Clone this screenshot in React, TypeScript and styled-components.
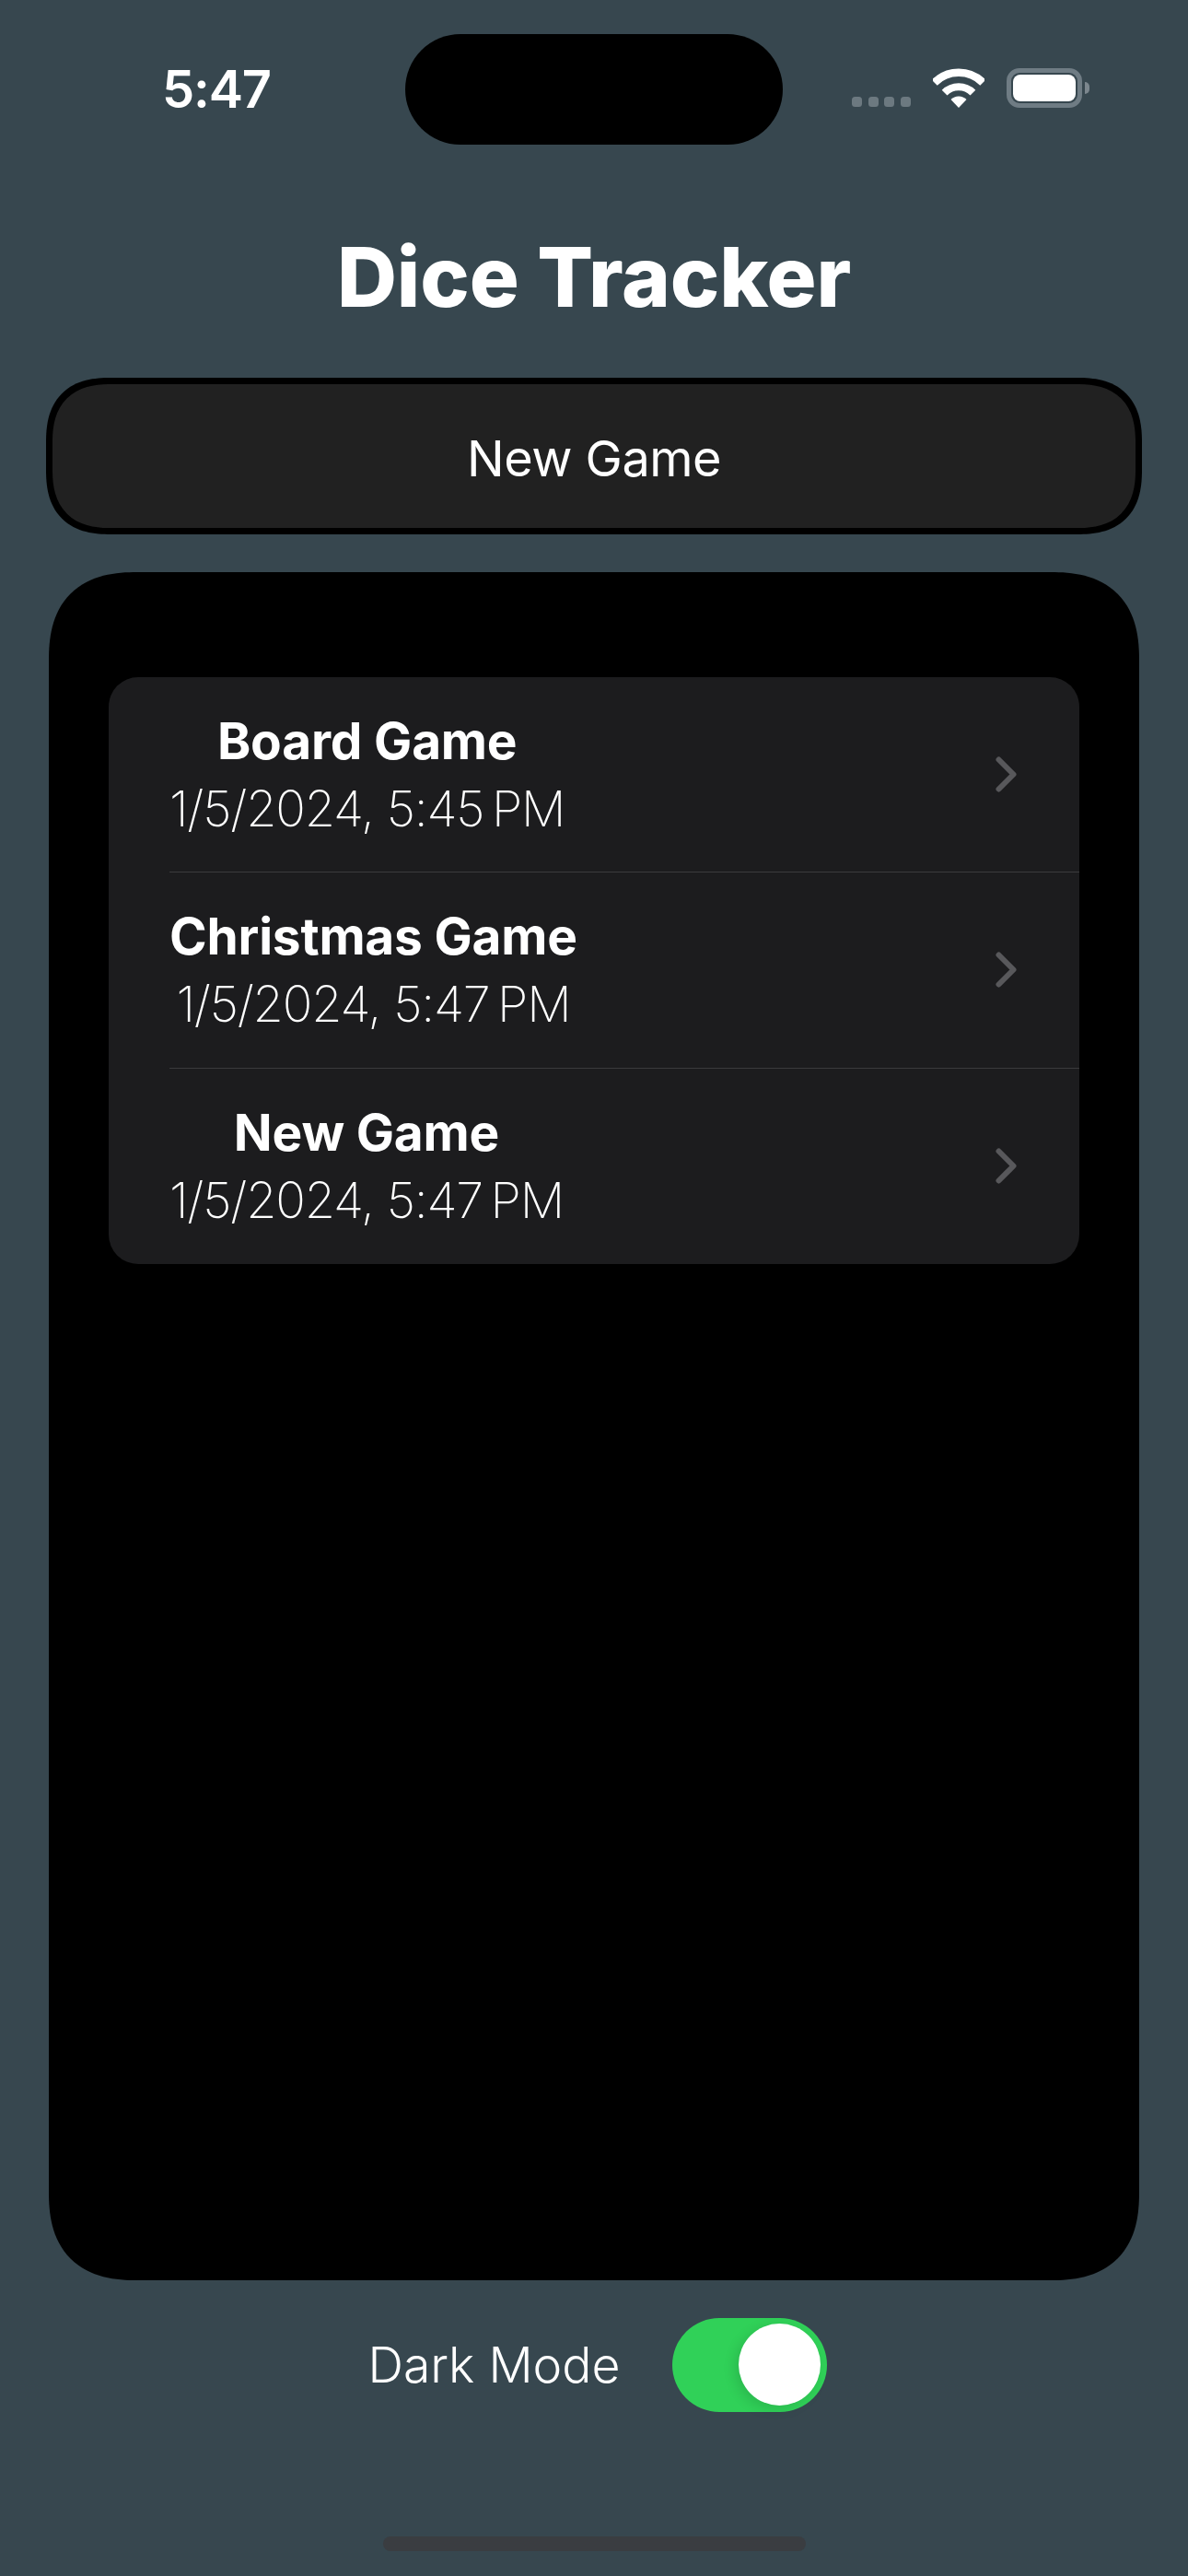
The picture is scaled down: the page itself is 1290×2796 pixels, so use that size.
import React from "react";
import styled, { createGlobalStyle } from "styled-components";

const Global = createGlobalStyle`
  html, body {
    margin: 0;
    padding: 0;
    background: #37474f;
  }
  * {
    box-sizing: border-box;
  }
`;

const Page = styled.div`
  width: 1290px;
  height: 2796px;
  overflow: hidden;
  background: #37474f;
  color: #fff;
  font-family: Inter, "Liberation Sans", sans-serif;
  display: flex;
  flex-direction: column;
  align-items: center;
  padding-top: 37px;
`;

const StatusBar = styled.div`
  width: 100%;
  height: 120px;
  display: grid;
  grid-template-columns: 440px 410px 440px;
  align-items: center;
`;

const Time = styled.div`
  padding-left: 176px;
  font-size: 56px;
  line-height: 120px;
  font-weight: 600;
  letter-spacing: -1.2px;
`;

const Island = styled.div`
  height: 120px;
  background: #000;
  border-radius: 60px;
`;

const StatusIcons = styled.div`
  height: 43px;
  margin-bottom: 3px;
  padding-left: 75px;
  display: flex;
  align-items: flex-end;
`;

const Dots = styled.div`
  display: flex;
  gap: 6.6px;
  margin-right: 24px;
  margin-bottom: 1px;
`;

const Dot = styled.span`
  width: 11px;
  height: 11px;
  border-radius: 3.5px;
  background: #6c7980;
`;

const Battery = styled.div`
  width: 82px;
  height: 43px;
  margin-left: 24px;
  padding: 2px;
  border: 5px solid #6f7c84;
  border-radius: 14px;
`;

const BatteryFill = styled.div`
  width: 100%;
  height: 100%;
  background: #fff;
  border-radius: 8px;
`;

const BatteryNub = styled.div`
  width: 5px;
  height: 13px;
  margin: 0 0 15px 3px;
  background: #7c878e;
  border-radius: 0 7px 7px 0;
`;

const Title = styled.h1`
  margin: 90px 0 55px;
  font-size: 90px;
  line-height: 108px;
  font-weight: 800;
  letter-spacing: -0.1px;
`;

const NewGameButton = styled.div`
  width: 1190px;
  height: 170px;
  border: 7px solid #000;
  border-radius: 70px;
  corner-shape: superellipse(1.3);
  background: #212121;
  display: flex;
  align-items: center;
  justify-content: center;
  padding-top: 4px;
  font-size: 54px;
  font-weight: 400;
  letter-spacing: -0.5px;
`;

const Panel = styled.div`
  width: 1184px;
  height: 1854px;
  margin-top: 41px;
  padding: 114px 65px 0;
  background: #000;
  border-radius: 96px;
  corner-shape: superellipse(1.3);
`;

const List = styled.div`
  height: 637px;
  background: #1c1c1e;
  border-radius: 32px;
  display: flex;
  flex-direction: column;
`;

const Row = styled.div`
  flex: 1;
  padding-left: 66px;
  display: flex;
`;

const RowInner = styled.div<{ $divider: boolean }>`
  flex: 1;
  padding-right: 68px;
  display: flex;
  align-items: center;
  justify-content: space-between;
  border-bottom: ${(p) => (p.$divider ? "1.5px solid #3a3a3c" : "none")};
`;

const RowText = styled.div`
  display: flex;
  flex-direction: column;
  align-items: center;
`;

const RowTitle = styled.div`
  font-size: 55px;
  line-height: 73px;
  font-weight: 700;
  letter-spacing: -0.2px;
`;

const RowDate = styled.div`
  font-size: 54px;
  line-height: 73px;
  font-weight: 150;
  letter-spacing: -1.2px;
`;

const Footer = styled.div`
  margin-top: 41px;
  padding-left: 7px;
  display: flex;
  align-items: center;
  gap: 56px;
`;

const FooterLabel = styled.div`
  font-size: 53.5px;
  line-height: 102px;
  font-weight: 350;
`;

const Switch = styled.div`
  position: relative;
  width: 168px;
  height: 102px;
  border-radius: 51px;
  background: #30d158;
`;

const Thumb = styled.div`
  position: absolute;
  top: 6px;
  right: 7px;
  width: 89px;
  height: 89px;
  border-radius: 50%;
  background: #fff;
  box-shadow: -4px 4px 14px rgba(0, 0, 0, 0.12);
`;

const HomeIndicator = styled.div`
  width: 459px;
  height: 16px;
  margin-top: 135px;
  border-radius: 8px;
  background: #3a3d41;
`;

const Wifi = () => (
  <svg width="56" height="43" viewBox="0 0 56 43" fill="none">
    <path d="M1.7 15.7A37.2 37.2 0 0 1 54.3 15.7" stroke="#fff" strokeWidth="8.6" />
    <path d="M12.6 26.6A21.8 21.8 0 0 1 43.4 26.6" stroke="#fff" strokeWidth="8.2" />
    <path d="M28 43L19.5 34A12 12 0 0 1 36.5 34Z" fill="#fff" />
  </svg>
);

const Chevron = () => (
  <svg width="23" height="39" viewBox="0 0 23 39" fill="none">
    <path
      d="M3.5 3.5L19.5 19.5L3.5 35.5"
      stroke="#58585b"
      strokeWidth="6"
      strokeLinecap="round"
      strokeLinejoin="round"
    />
  </svg>
);

const games = [
  { name: "Board Game", date: "1/5/2024, 5:45\u202fPM" },
  { name: "Christmas Game", date: "1/5/2024, 5:47\u202fPM" },
  { name: "New Game", date: "1/5/2024, 5:47\u202fPM" },
];

const App: React.FC = () => {
  return (
    <Page>
      <Global />
      <StatusBar>
        <Time>5:47</Time>
        <Island />
        <StatusIcons>
          <Dots>
            <Dot />
            <Dot />
            <Dot />
            <Dot />
          </Dots>
          <Wifi />
          <Battery>
            <BatteryFill />
          </Battery>
          <BatteryNub />
        </StatusIcons>
      </StatusBar>
      <Title>Dice Tracker</Title>
      <NewGameButton>New Game</NewGameButton>
      <Panel>
        <List>
          {games.map((game, i) => (
            <Row key={i}>
              <RowInner $divider={i < games.length - 1}>
                <RowText>
                  <RowTitle>{game.name}</RowTitle>
                  <RowDate>{game.date}</RowDate>
                </RowText>
                <Chevron />
              </RowInner>
            </Row>
          ))}
        </List>
      </Panel>
      <Footer>
        <FooterLabel>Dark Mode</FooterLabel>
        <Switch>
          <Thumb />
        </Switch>
      </Footer>
      <HomeIndicator />
    </Page>
  );
};

export default App;
